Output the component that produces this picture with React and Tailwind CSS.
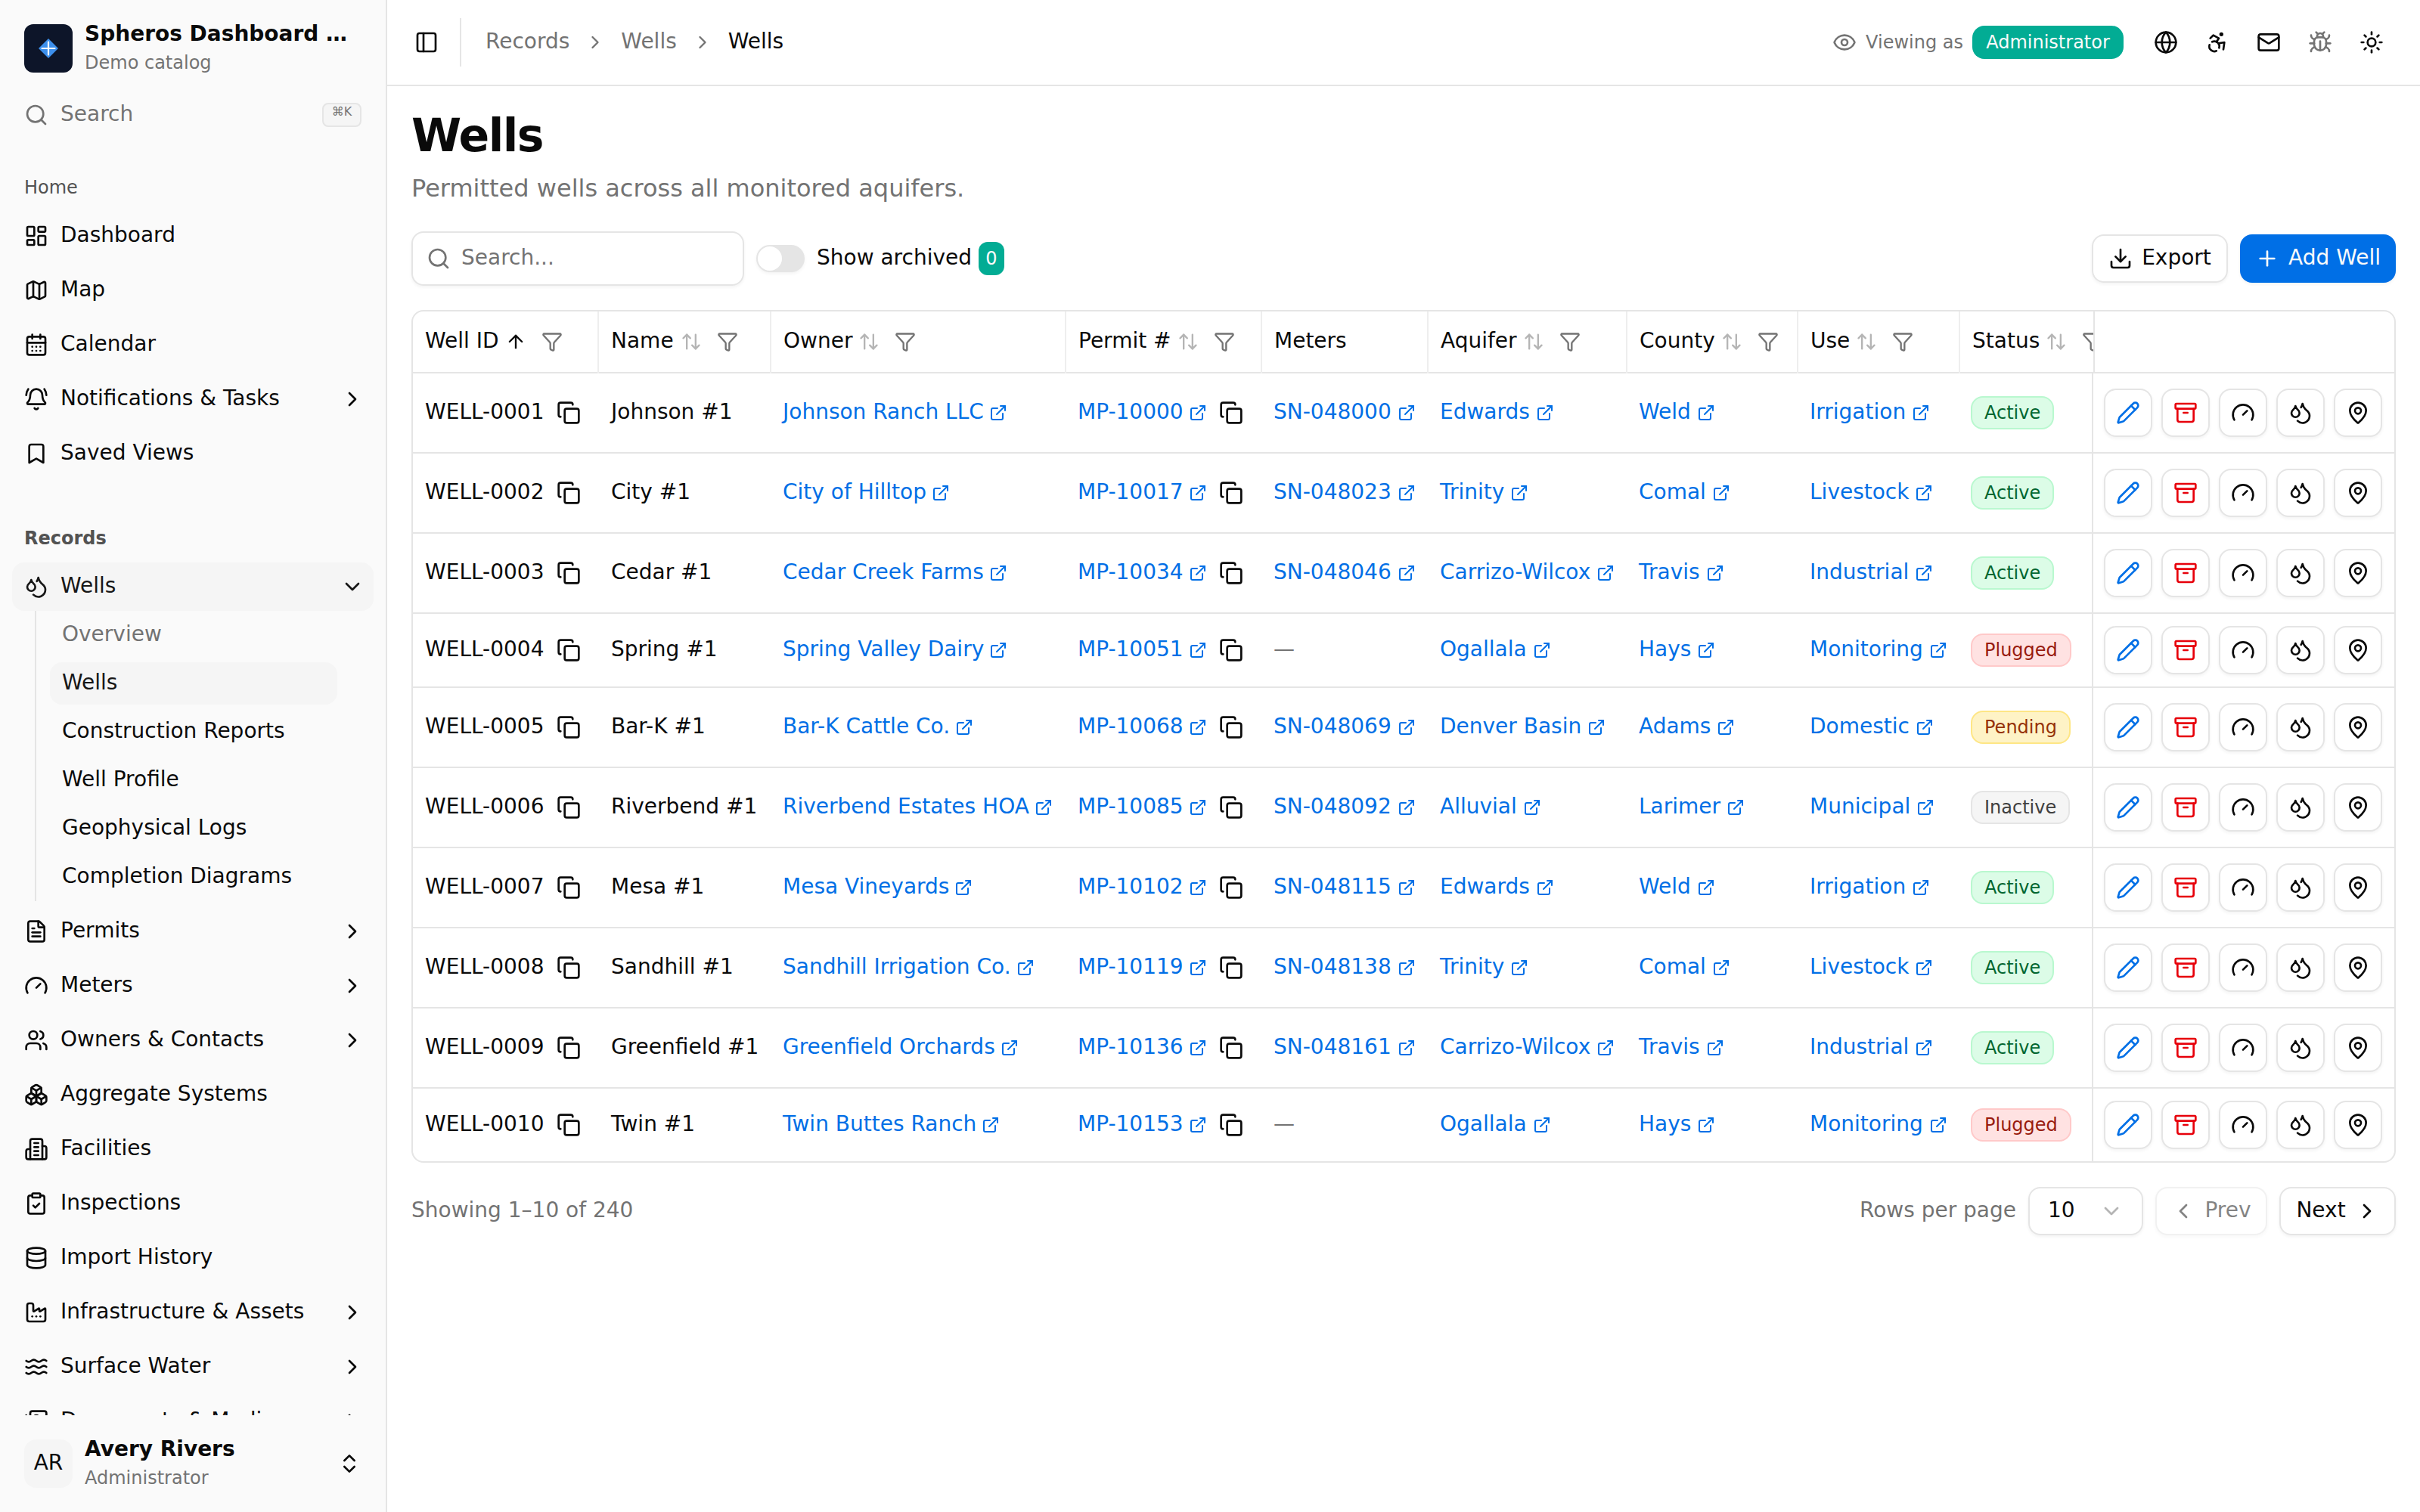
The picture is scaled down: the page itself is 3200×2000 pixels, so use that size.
import React from "react";
import {
  Accessibility, Archive, ArrowUp, ArrowUpDown, BellRing, Bookmark, Boxes, Bug,
  CalendarDays, ChevronDown, ChevronLeft, ChevronRight, ChevronsUpDown, ClipboardCheck, Copy,
  Database, Download, Droplets, ExternalLink, Eye, Factory, FileText, Funnel, Gauge, Globe,
  LayoutDashboard, Mail, Map as MapIcon, MapPin, PanelLeft, Pencil, Plus, Search, Sun, Users, Waves,
} from "lucide-react";

function Stroke({ className, children }) {
  return (
    <svg className={className} viewBox="0 0 24 24" fill="none" stroke="currentColor" strokeWidth="2" strokeLinecap="round" strokeLinejoin="round">
      {children}
    </svg>
  );
}

function OfficeBuilding({ className }) {
  return (
    <Stroke className={className}>
      <path d="M6 22V4a2 2 0 0 1 2-2h8a2 2 0 0 1 2 2v18Z" />
      <path d="M6 12H4a2 2 0 0 0-2 2v6a2 2 0 0 0 2 2h2" />
      <path d="M18 9h2a2 2 0 0 1 2 2v9a2 2 0 0 1-2 2h-2" />
      <path d="M10 6h4" />
      <path d="M10 10h4" />
      <path d="M10 14h4" />
      <path d="M10 18h4" />
    </Stroke>
  );
}

function ImageStack({ className }) {
  return (
    <Stroke className={className}>
      <path d="M18 22H4a2 2 0 0 1-2-2V6" />
      <path d="m22 13-1.296-1.296a2.41 2.41 0 0 0-3.408 0L11 18" />
      <circle cx="12" cy="8" r="2" />
      <rect width="16" height="16" x="6" y="2" rx="2" />
    </Stroke>
  );
}

function Logo() {
  return (
    <svg className="size-16 shrink-0 rounded-xl" viewBox="0 0 64 64">
      <rect width="64" height="64" fill="#0d1529" />
      <path d="M32 19 45 32 32 45 19 32Z" fill="#3c8fec" />
      <path d="M32 23.5v17M23.5 32h17" stroke="#fff" strokeWidth="2.2" strokeLinecap="round" />
    </svg>
  );
}

const homeItems = [
  { label: "Dashboard", icon: LayoutDashboard },
  { label: "Map", icon: MapIcon },
  { label: "Calendar", icon: CalendarDays },
  { label: "Notifications & Tasks", icon: BellRing, more: true },
  { label: "Saved Views", icon: Bookmark },
];

const wellPages = ["Overview", "Wells", "Construction Reports", "Well Profile", "Geophysical Logs", "Completion Diagrams"];

const recordItems = [
  { label: "Permits", icon: FileText, more: true },
  { label: "Meters", icon: Gauge, more: true },
  { label: "Owners & Contacts", icon: Users, more: true },
  { label: "Aggregate Systems", icon: Boxes },
  { label: "Facilities", icon: OfficeBuilding },
  { label: "Inspections", icon: ClipboardCheck },
  { label: "Import History", icon: Database },
  { label: "Infrastructure & Assets", icon: Factory, more: true },
  { label: "Surface Water", icon: Waves, more: true },
  { label: "Documents & Media", icon: ImageStack, more: true },
];

function NavItem({ item }) {
  const Icon = item.icon;
  return (
    <div className="flex h-16 shrink-0 items-center gap-4 rounded-2xl px-4">
      <Icon className="size-8 shrink-0" />
      <span className="-mt-0.5 flex-1 whitespace-nowrap">{item.label}</span>
      {item.more && <ChevronRight className="mr-[-4px] size-8 shrink-0" />}
    </div>
  );
}

function Sidebar() {
  return (
    <aside className="flex h-full w-[512px] shrink-0 flex-col border-r-2 border-[#e5e5e5] bg-[#fafafa]">
      <div className="flex h-[200px] shrink-0 flex-col gap-2 p-4">
        <div className="flex h-24 items-center gap-4 px-4">
          <Logo />
          <div className="-mt-[3px] flex min-w-0 flex-col gap-[5px]">
            <span className="text-[28px]/[35px] font-bold whitespace-nowrap">Spheros Dashboard …</span>
            <span className="text-2xl/8 text-[#737373]">Demo catalog</span>
          </div>
        </div>
        <div className="flex h-16 items-center gap-4 px-4 text-[#737373]">
          <Search className="size-8" />
          <span className="-mt-0.5 flex-1">Search</span>
          <kbd className="flex h-8 w-[52px] items-start justify-center rounded-lg border-2 border-[#e5e5e5] bg-[#f5f5f5] font-['DejaVu_Sans'] text-[16px]/[20px]">⌘K</kbd>
        </div>
      </div>
      <nav className="flex min-h-0 flex-1 flex-col gap-4 overflow-hidden">
        <div className="flex shrink-0 flex-col p-4">
          <div className="flex h-16 items-center px-4 text-2xl text-[#525252]">Home</div>
          <div className="flex flex-col gap-2">
            {homeItems.map((item) => <NavItem key={item.label} item={item} />)}
          </div>
        </div>
        <div className="flex shrink-0 flex-col p-4">
          <div className="flex h-16 items-center px-4 text-2xl font-bold text-[#525252]">Records</div>
          <div className="flex h-16 items-center gap-4 rounded-2xl bg-[#f5f5f5] px-4 text-[#171717]">
            <Droplets className="size-8" />
            <span className="-mt-0.5 flex-1">Wells</span>
            <ChevronDown className="mr-[-4px] size-8" />
          </div>
          <div className="mb-2 ml-[30px] mr-12 flex flex-col gap-2 border-l-2 border-[#e5e5e5] py-1 pl-[18px]">
            {wellPages.map((page) => (
              <div
                key={page}
                className={
                  page === "Wells"
                    ? "flex h-14 items-center rounded-2xl bg-[#f5f5f5] px-4 text-[#171717]"
                    : page === "Overview"
                      ? "flex h-14 items-center px-4 text-[#737373]"
                      : "flex h-14 items-center px-4"
                }
              >
                <span className="-mt-0.5 whitespace-nowrap">{page}</span>
              </div>
            ))}
          </div>
          <div className="flex flex-col gap-2">
            {recordItems.map((item) => <NavItem key={item.label} item={item} />)}
          </div>
        </div>
      </nav>
      <div className="flex h-32 shrink-0 items-center gap-4 px-8">
        <div className="flex size-16 items-center justify-center rounded-2xl bg-[#f5f5f5]"><span className="-mt-0.5">AR</span></div>
        <div className="-mt-[3px] flex flex-1 flex-col gap-[5px]">
          <span className="text-[28px]/[35px] font-bold whitespace-nowrap">Avery Rivers</span>
          <span className="text-2xl/8 text-[#737373]">Administrator</span>
        </div>
        <ChevronsUpDown className="size-8" />
      </div>
    </aside>
  );
}

function TopBar() {
  return (
    <header className="flex h-[114px] shrink-0 items-center border-b-2 border-[#e5e5e5] pr-8 pl-9">
      <PanelLeft className="size-8" />
      <div className="ml-7 h-16 w-0.5 bg-[#e5e5e5]" />
      <div className="ml-8 flex items-center gap-5 text-[#737373]">
        <span className="-mt-0.5">Records</span>
        <ChevronRight className="size-7" />
        <span className="-mt-0.5">Wells</span>
        <ChevronRight className="size-7" />
        <span className="-mt-0.5 text-[#0a0a0a]">Wells</span>
      </div>
      <div className="ml-auto flex items-center">
        <Eye className="size-8 text-[#737373]" />
        <span className="mr-3 ml-3 text-2xl text-[#737373]">Viewing as</span>
        <span className="flex h-11 w-[200px] items-center justify-center rounded-2xl bg-[#02ac94] text-2xl text-[#fafafa]">Administrator</span>
        <div className="ml-6 flex items-center gap-1">
          <span className="flex size-16 items-center justify-center"><Globe className="size-8" /></span>
          <span className="flex size-16 items-center justify-center"><Accessibility className="size-8" /></span>
          <span className="flex size-16 items-center justify-center"><Mail className="size-8" /></span>
          <span className="flex size-16 items-center justify-center text-[#737373]"><Bug className="size-8" /></span>
          <span className="flex size-16 items-center justify-center"><Sun className="size-8" /></span>
        </div>
      </div>
    </header>
  );
}

function Toolbar() {
  return (
    <div className="mt-8 flex h-[72px] items-center">
      <div className="flex h-[72px] w-[440px] items-center gap-3.5 rounded-2xl border-2 border-[#e5e5e5] px-[18px] text-[#737373] shadow-[0_2px_4px_0_rgba(0,0,0,0.05)]">
        <Search className="size-8" />
        <span className="-mt-0.5">Search...</span>
      </div>
      <div className="ml-4 flex h-9 w-16 items-center rounded-full bg-[#e5e5e5] p-0.5 shadow-[0_2px_4px_0_rgba(0,0,0,0.05)]">
        <div className="size-8 rounded-full bg-white" />
      </div>
      <span className="-mt-0.5 ml-4">Show archived</span>
      <span className="ml-[9px] flex h-11 w-[34px] items-center justify-center rounded-xl bg-[#02ac94] text-2xl text-[#fafafa]">0</span>
      <div className="ml-auto flex gap-4">
        <div className="flex h-16 w-[180px] items-center justify-center gap-3 rounded-2xl border-2 border-[#e5e5e5] shadow-[0_2px_4px_0_rgba(0,0,0,0.05)]">
          <Download className="size-8" />
          <span className="-mt-0.5">Export</span>
        </div>
        <div className="flex h-16 w-[206px] items-center justify-center gap-3 rounded-2xl bg-[#006fe6] text-[#fafafa] shadow-[0_2px_4px_0_rgba(0,0,0,0.05)]">
          <Plus className="size-8" />
          <span className="-mt-0.5">Add Well</span>
        </div>
      </div>
    </div>
  );
}

const rowGrid = "grid grid-cols-[246px_227px_390px_259px_220px_263px_226px_214px_215px]";

const headings = [
  { label: "Well ID", sort: "asc" },
  { label: "Name", sort: "both" },
  { label: "Owner", sort: "both" },
  { label: "Permit #", sort: "both" },
  { label: "Meters" },
  { label: "Aquifer", sort: "both" },
  { label: "County", sort: "both" },
  { label: "Use", sort: "both" },
  { label: "Status", sort: "both" },
];

const wells = [
  ["WELL-0001", "Johnson #1", "Johnson Ranch LLC", "MP-10000", "SN-048000", "Edwards", "Weld", "Irrigation", "Active"],
  ["WELL-0002", "City #1", "City of Hilltop", "MP-10017", "SN-048023", "Trinity", "Comal", "Livestock", "Active"],
  ["WELL-0003", "Cedar #1", "Cedar Creek Farms", "MP-10034", "SN-048046", "Carrizo-Wilcox", "Travis", "Industrial", "Active"],
  ["WELL-0004", "Spring #1", "Spring Valley Dairy", "MP-10051", null, "Ogallala", "Hays", "Monitoring", "Plugged"],
  ["WELL-0005", "Bar-K #1", "Bar-K Cattle Co.", "MP-10068", "SN-048069", "Denver Basin", "Adams", "Domestic", "Pending"],
  ["WELL-0006", "Riverbend #1", "Riverbend Estates HOA", "MP-10085", "SN-048092", "Alluvial", "Larimer", "Municipal", "Inactive"],
  ["WELL-0007", "Mesa #1", "Mesa Vineyards", "MP-10102", "SN-048115", "Edwards", "Weld", "Irrigation", "Active"],
  ["WELL-0008", "Sandhill #1", "Sandhill Irrigation Co.", "MP-10119", "SN-048138", "Trinity", "Comal", "Livestock", "Active"],
  ["WELL-0009", "Greenfield #1", "Greenfield Orchards", "MP-10136", "SN-048161", "Carrizo-Wilcox", "Travis", "Industrial", "Active"],
  ["WELL-0010", "Twin #1", "Twin Buttes Ranch", "MP-10153", null, "Ogallala", "Hays", "Monitoring", "Plugged"],
];

const statusStyle = {
  Active: "border-[#b9f8cf] bg-[#dcfce7] text-[#016630]",
  Plugged: "border-[#ffc9c9] bg-[#ffe2e2] text-[#981b0e]",
  Pending: "border-[#fee685] bg-[#fef3c6] text-[#953208]",
  Inactive: "border-[#e5e5e5] bg-[#f5f5f5] text-[#404040]",
};

function Cell({ children }) {
  return <div className="flex items-center pl-4 whitespace-nowrap">{children}</div>;
}

function LinkText({ tight, children }) {
  return (
    <span className={tight ? "flex items-center gap-[7px] text-[#006fe6]" : "flex items-center gap-2 text-[#006fe6]"}>
      <span className="-mt-0.5">{children}</span>
      <ExternalLink className="size-6 shrink-0" />
    </span>
  );
}

function Action({ icon: Icon, className }) {
  return (
    <span className="flex size-16 shrink-0 items-center justify-center rounded-2xl border-2 border-[#e5e5e5] bg-white shadow-[0_2px_4px_0_rgba(0,0,0,0.05)]">
      <Icon className={className} />
    </span>
  );
}

function WellRow({ well, last }) {
  const [id, name, owner, permit, meter, aquifer, county, use, status] = well;
  const height = last ? "h-24" : meter ? "h-[106px] border-b-2" : "h-[98px] border-b-2";
  return (
    <div className={`flex border-[#e5e5e5] ${height}`}>
      <div className="min-w-0 flex-1 overflow-hidden">
        <div className={`h-full ${rowGrid}`}>
          <Cell><span className="-mt-0.5 mr-[17px]">{id}</span><Copy className="size-8 shrink-0" /></Cell>
          <Cell><span className="-mt-0.5">{name}</span></Cell>
          <Cell><LinkText tight>{owner}</LinkText></Cell>
          <Cell><LinkText tight>{permit}</LinkText><Copy className="ml-4 size-8 shrink-0" /></Cell>
          <Cell>{meter ? <LinkText>{meter}</LinkText> : <span className="-mt-0.5 text-[#737373]">—</span>}</Cell>
          <Cell><LinkText>{aquifer}</LinkText></Cell>
          <Cell><LinkText>{county}</LinkText></Cell>
          <Cell><LinkText>{use}</LinkText></Cell>
          <Cell><span className={`-ml-px flex h-11 items-center rounded-2xl border-2 px-4 text-2xl ${statusStyle[status]}`}>{status}</span></Cell>
        </div>
      </div>
      <div className="flex w-[400px] shrink-0 items-center gap-3 border-l-2 border-[#e5e5e5] pl-3.5">
        <Action icon={Pencil} className="size-8 text-[#006fe6]" />
        <Action icon={Archive} className="size-8 text-[#e7000b]" />
        <Action icon={Gauge} className="size-8" />
        <Action icon={Droplets} className="size-8" />
        <Action icon={MapPin} className="size-8" />
      </div>
    </div>
  );
}

function WellTable() {
  return (
    <div className="mt-8 overflow-hidden rounded-2xl border-2 border-[#e5e5e5]">
      <div className="flex h-[82px] border-b-2 border-[#e5e5e5]">
        <div className="h-[82px] min-w-0 flex-1 overflow-hidden">
          <div className={`h-full ${rowGrid}`}>
            {headings.map((heading, index) => (
              <div
                key={heading.label}
                className={
                  index < 2
                    ? "relative flex items-center pb-0.5 pl-4 whitespace-nowrap"
                    : "relative flex items-center pb-0.5 pl-[17px] whitespace-nowrap"
                }
              >
                <span className="-mt-0.5">{heading.label}</span>
                {heading.sort === "asc" && <ArrowUp className="ml-2 size-7 shrink-0" />}
                {heading.sort === "both" && (
                  <ArrowUpDown className={index < 2 ? "ml-[9px] size-7 shrink-0 text-[#b5b5b5]" : "ml-2 size-7 shrink-0 text-[#b5b5b5]"} />
                )}
                {heading.sort && <Funnel className="ml-5 size-7 shrink-0 text-[#737373]" />}
                <span
                  className={
                    index === 0
                      ? "absolute inset-y-0 right-0 z-10 w-0.5 bg-[#eeeeee]"
                      : "absolute inset-y-0 -right-px z-10 w-0.5 bg-[#eeeeee]"
                  }
                />
              </div>
            ))}
          </div>
        </div>
        <div className="w-[398px] shrink-0 border-l-2 border-[#e5e5e5]" />
      </div>
      {wells.map((well, index) => <WellRow key={well[0]} well={well} last={index === wells.length - 1} />)}
    </div>
  );
}

function Pagination() {
  return (
    <div className="mt-8 flex h-16 items-center gap-4">
      <span className="-mt-0.5 flex-1 text-[#737373]">Showing 1–10 of 240</span>
      <span className="-mt-0.5 text-[#737373]">Rows per page</span>
      <div className="flex h-16 w-[152px] items-center justify-between rounded-2xl border-2 border-[#e5e5e5] px-6 shadow-[0_2px_4px_0_rgba(0,0,0,0.05)]">
        <span className="-mt-0.5">10</span>
        <ChevronDown className="size-8 text-[#b5b5b5]" />
      </div>
      <div className="flex h-16 w-[148px] items-center justify-center gap-3 rounded-2xl border-2 border-[#e5e5e5] opacity-50 shadow-[0_2px_4px_0_rgba(0,0,0,0.05)]">
        <ChevronLeft className="size-8" />
        <span className="-mt-0.5">Prev</span>
      </div>
      <div className="flex h-16 w-[154px] items-center justify-center gap-3 rounded-2xl border-2 border-[#e5e5e5] shadow-[0_2px_4px_0_rgba(0,0,0,0.05)]">
        <span className="-mt-0.5">Next</span>
        <ChevronRight className="size-8" />
      </div>
    </div>
  );
}

export default function App() {
  return (
    <div className="flex h-[2000px] w-[3200px] overflow-hidden bg-white font-['DejaVu_Sans',sans-serif] text-[28px]/[40px] text-[#0a0a0a]">
      <Sidebar />
      <div className="flex min-w-0 flex-1 flex-col">
        <TopBar />
        <main className="flex flex-col px-8 pt-8">
          <h1 className="text-[60px]/[66px] font-bold tracking-tight">Wells</h1>
          <p className="mt-[13px] mb-px text-[32px]/[48px] text-[#737373]">Permitted wells across all monitored aquifers.</p>
          <Toolbar />
          <WellTable />
          <Pagination />
        </main>
      </div>
    </div>
  );
}
